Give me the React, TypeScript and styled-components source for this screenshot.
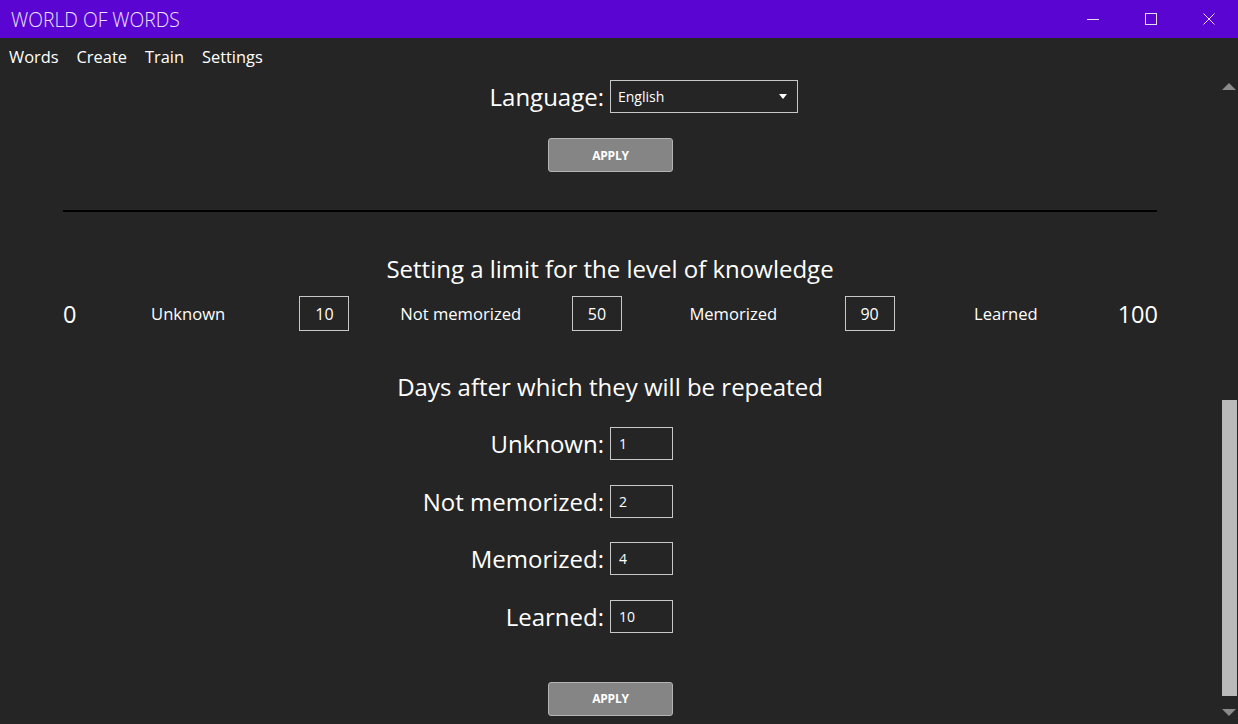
import React from "react";
import styled, { createGlobalStyle } from "styled-components";

const Global = createGlobalStyle`
  html, body { margin: 0; padding: 0; background: #252525; }
  body { font-family: "Open Sans", "Noto Sans", sans-serif; overflow: hidden; }
  * { box-sizing: border-box; }
`;

const Window = styled.div`
  width: 1238px;
  height: 724px;
  display: flex;
  flex-direction: column;
  background: #252525;
  color: #ffffff;
`;

const TitleBar = styled.div`
  height: 38px;
  flex: none;
  background: #5b05d3;
  display: flex;
  align-items: center;
`;

const Title = styled.div`
  flex: 1;
  padding-left: 11px;
  font-size: 19.3px;
  font-weight: 300;
  color: #ece2fa;
  letter-spacing: 0;
`;

const WinButton = styled.div`
  width: 58px;
  height: 38px;
  display: flex;
  align-items: center;
  justify-content: center;
  color: #e6daf6;
`;

const MenuBar = styled.div`
  height: 38px;
  flex: none;
  display: flex;
  align-items: center;
  padding-left: 9px;
  gap: 18px;
  padding-bottom: 2px;
`;

const MenuItem = styled.div`
  font-size: 16.4px;
  color: #ffffff;
`;

const Body = styled.div`
  flex: 1;
  display: flex;
  min-height: 0;
`;

const Content = styled.div`
  flex: 1;
  display: flex;
  flex-direction: column;
  align-items: stretch;
  padding-top: 4px;
`;

const FormRow = styled.div<{ $mt?: number }>`
  display: grid;
  grid-template-columns: 1fr 1fr;
  align-items: center;
  margin-top: ${(p) => p.$mt ?? 0}px;
`;

const BigLabel = styled.div`
  font-size: 24px;
  text-align: right;
  padding-right: 7px;
  line-height: 32px;
  padding-top: 1px;
  white-space: nowrap;
`;

const SelectBox = styled.div`
  margin-left: -1px;
  width: 188px;
  height: 33px;
  border: 1px solid #c8c8c8;
  background: #252525;
  display: flex;
  align-items: center;
  justify-content: space-between;
  padding: 0 10px 0 7px;
  font-size: 14px;
`;

const Caret = styled.span`
  width: 0;
  height: 0;
  border-left: 4px solid transparent;
  border-right: 4px solid transparent;
  border-top: 5px solid #ffffff;
`;

const ApplyButton = styled.div<{ $mt: number }>`
  align-self: center;
  margin-top: ${(p) => p.$mt}px;
  margin-left: -1px;
  width: 125px;
  height: 34px;
  background: #858585;
  border: 1px solid #b4b4b4;
  border-radius: 3px;
  display: flex;
  align-items: center;
  justify-content: center;
  font-size: 12px;
  font-weight: 700;
  color: #ffffff;
  letter-spacing: -0.2px;
`;

const Divider = styled.div`
  margin: 38px 65px 0 63px;
  height: 2px;
  background: #000000;
`;

const Heading = styled.div<{ $mt: number }>`
  margin-top: ${(p) => p.$mt}px;
  text-align: center;
  font-size: 24px;
  line-height: 32px;
  padding-right: 2px;
`;

const LimitRow = styled.div`
  margin: 11px 64px 0 63px;
  display: grid;
  grid-template-columns: 57px repeat(7, 1fr) 84px;
  align-items: center;
  height: 35px;
`;

const Edge = styled.div<{ $right?: boolean }>`
  font-size: 23.5px;
  text-align: ${(p) => (p.$right ? "right" : "left")};
`;

const LevelName = styled.div`
  font-size: 16.6px;
  text-align: center;
  white-space: nowrap;
`;

const LimitBox = styled.div`
  justify-self: center;
  width: 50px;
  height: 35px;
  border: 1px solid #c8c8c8;
  display: flex;
  align-items: center;
  justify-content: center;
  font-size: 16px;
`;

const DaysList = styled.div`
  margin-top: 24px;
  display: flex;
  flex-direction: column;
  gap: 24.6px;
`;

const DaysBox = styled.div`
  margin-left: -1px;
  width: 63px;
  height: 33px;
  border: 1px solid #c8c8c8;
  display: flex;
  align-items: center;
  padding-left: 8px;
  font-size: 14px;
`;

const ScrollBar = styled.div`
  width: 16px;
  flex: none;
  display: flex;
  flex-direction: column;
`;

const Arrow = styled.div<{ $down?: boolean }>`
  height: 16px;
  flex: none;
  display: flex;
  justify-content: center;
  align-items: ${(p) => (p.$down ? "flex-start" : "flex-end")};
  padding: ${(p) => (p.$down ? "1px 2px 0 0" : "0 2px 2px 0")};
  &::before {
    content: "";
    width: 0;
    height: 0;
    border-left: 7px solid transparent;
    border-right: 7px solid transparent;
    ${(p) => (p.$down ? "border-top: 7px solid #8a8a8a;" : "border-bottom: 7px solid #8a8a8a;")}
  }
`;

const Track = styled.div`
  flex: 1;
  display: flex;
  flex-direction: column;
  justify-content: flex-end;
  padding-bottom: 12px;
`;

const Thumb = styled.div`
  width: 15px;
  height: 296px;
  background: #bababa;
`;

const levels = [
  { name: "Unknown", limit: 10 },
  { name: "Not memorized", limit: 50 },
  { name: "Memorized", limit: 90 },
  { name: "Learned", limit: null as number | null },
];

const days = [
  { name: "Unknown", value: "1" },
  { name: "Not memorized", value: "2" },
  { name: "Memorized", value: "4" },
  { name: "Learned", value: "10" },
];

export default function App() {
  return (
    <Window>
      <Global />
      <TitleBar>
        <Title>WORLD OF WORDS</Title>
        <WinButton>
          <svg width="12" height="12" viewBox="0 0 12 12">
            <line x1="0" y1="6.5" x2="12" y2="6.5" stroke="currentColor" strokeWidth="1" />
          </svg>
        </WinButton>
        <WinButton>
          <svg width="12" height="12" viewBox="0 0 12 12">
            <rect x="0.5" y="0.5" width="11" height="11" fill="none" stroke="currentColor" strokeWidth="1" />
          </svg>
        </WinButton>
        <WinButton>
          <svg width="12" height="12" viewBox="0 0 12 12">
            <path d="M0.5 0.5 L11.5 11.5 M11.5 0.5 L0.5 11.5" stroke="currentColor" strokeWidth="1" />
          </svg>
        </WinButton>
      </TitleBar>
      <MenuBar>
        <MenuItem>Words</MenuItem>
        <MenuItem>Create</MenuItem>
        <MenuItem>Train</MenuItem>
        <MenuItem>Settings</MenuItem>
      </MenuBar>
      <Body>
        <Content>
          <FormRow>
            <BigLabel>Language:</BigLabel>
            <SelectBox>
              <span>English</span>
              <Caret />
            </SelectBox>
          </FormRow>
          <ApplyButton $mt={25}>APPLY</ApplyButton>
          <Divider />
          <Heading $mt={41}>Setting a limit for the level of knowledge</Heading>
          <LimitRow>
            <Edge>0</Edge>
            {levels.map((l) => (
              <React.Fragment key={l.name}>
                <LevelName>{l.name}</LevelName>
                {l.limit !== null && <LimitBox>{l.limit}</LimitBox>}
              </React.Fragment>
            ))}
            <Edge $right>100</Edge>
          </LimitRow>
          <Heading $mt={40}>Days after which they will be repeated</Heading>
          <DaysList>
            {days.map((d) => (
              <FormRow key={d.name}>
                <BigLabel>{d.name}:</BigLabel>
                <DaysBox>{d.value}</DaysBox>
              </FormRow>
            ))}
          </DaysList>
          <ApplyButton $mt={49}>APPLY</ApplyButton>
        </Content>
        <ScrollBar>
          <Arrow />
          <Track>
            <Thumb />
          </Track>
          <Arrow $down />
        </ScrollBar>
      </Body>
    </Window>
  );
}
